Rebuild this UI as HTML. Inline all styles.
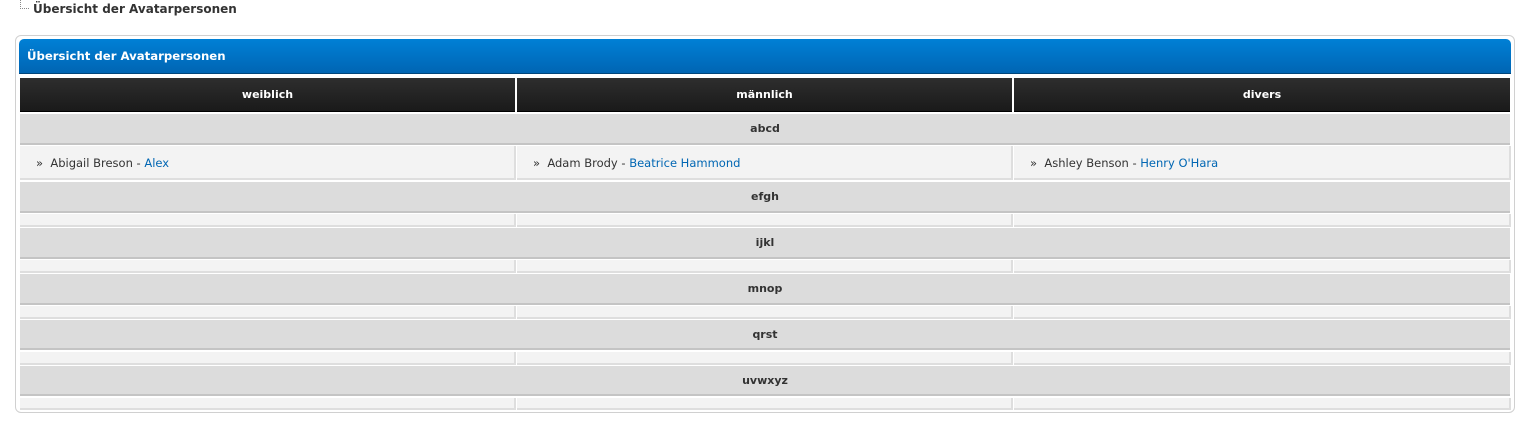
<!DOCTYPE html>
<html><head><meta charset="utf-8"><style>
body{margin:0;width:1521px;height:429px;background:#fff;position:relative;font-family:"DejaVu Sans",Verdana,sans-serif;font-size:11px;color:#333;overflow:hidden}
div{position:absolute;box-sizing:border-box}
.crumb{left:33px;top:2px;font-weight:bold;font-size:12px;color:#333}
.dots{left:20px;top:0;width:9px;height:9px;border-left:1px dotted #888;border-bottom:1px dotted #888}
.box{left:15px;top:35px;width:1500px;height:378px;border:1px solid #d0d0d0;border-radius:6px}
.title{left:19px;top:39px;width:1492px;height:35px;background:linear-gradient(#0080d6,#0065b3);border-radius:5px 5px 0 0;border-bottom:1px solid #00457a;color:#fff;font-weight:bold;font-size:11.7px;padding:10px 0 0 8px}
.th{top:78px;height:34px;background:linear-gradient(#2e2e2e,#1a1a1a);border-bottom:1px solid #000;color:#fff;font-weight:bold;text-align:center;padding-top:10px}
.cat{left:20px;width:1490px;background:#dcdcdc;border-bottom:2px solid #c4c4c4;font-weight:bold;text-align:center;color:#333}
.td{background:#f3f3f3;border-right:2px solid #dedede;border-bottom:2px solid #dedede}
.td span{position:absolute;left:16px;top:10px;font-size:11.5px}
a{color:#0066b3;text-decoration:none}
</style></head><body>
<div class="dots"></div>
<div class="crumb">Übersicht der Avatarpersonen</div>
<div class="box"></div>
<div class="title">Übersicht der Avatarpersonen</div>
<div class="th" style="left:20px;width:495px">weiblich</div>
<div class="th" style="left:517px;width:495px">männlich</div>
<div class="th" style="left:1014px;width:496px">divers</div>

<div class="cat" style="top:114px;height:31px;padding-top:8px">abcd</div>
<div class="td" style="left:20px;top:146px;width:496px;height:34px"><span>»&nbsp; Abigail Breson - <a>Alex</a></span></div>
<div class="td" style="left:517px;top:146px;width:496px;height:34px"><span>»&nbsp; Adam Brody - <a>Beatrice Hammond</a></span></div>
<div class="td" style="left:1014px;top:146px;width:497px;height:34px"><span>»&nbsp; Ashley Benson - <a>Henry O'Hara</a></span></div>

<div class="cat" style="top:182px;height:31px;padding-top:8px">efgh</div>
<div class="td" style="left:20px;top:214px;width:496px;height:13px"></div>
<div class="td" style="left:517px;top:214px;width:496px;height:13px"></div>
<div class="td" style="left:1014px;top:214px;width:497px;height:13px"></div>

<div class="cat" style="top:228px;height:31px;padding-top:8px">ijkl</div>
<div class="td" style="left:20px;top:260px;width:496px;height:13px"></div>
<div class="td" style="left:517px;top:260px;width:496px;height:13px"></div>
<div class="td" style="left:1014px;top:260px;width:497px;height:13px"></div>

<div class="cat" style="top:274px;height:31px;padding-top:8px">mnop</div>
<div class="td" style="left:20px;top:306px;width:496px;height:13px"></div>
<div class="td" style="left:517px;top:306px;width:496px;height:13px"></div>
<div class="td" style="left:1014px;top:306px;width:497px;height:13px"></div>

<div class="cat" style="top:320px;height:30px;padding-top:8px">qrst</div>
<div class="td" style="left:20px;top:352px;width:496px;height:13px"></div>
<div class="td" style="left:517px;top:352px;width:496px;height:13px"></div>
<div class="td" style="left:1014px;top:352px;width:497px;height:13px"></div>

<div class="cat" style="top:366px;height:30px;padding-top:8px">uvwxyz</div>
<div class="td" style="left:20px;top:398px;width:496px;height:12px"></div>
<div class="td" style="left:517px;top:398px;width:496px;height:12px"></div>
<div class="td" style="left:1014px;top:398px;width:497px;height:12px"></div>
</body></html>
